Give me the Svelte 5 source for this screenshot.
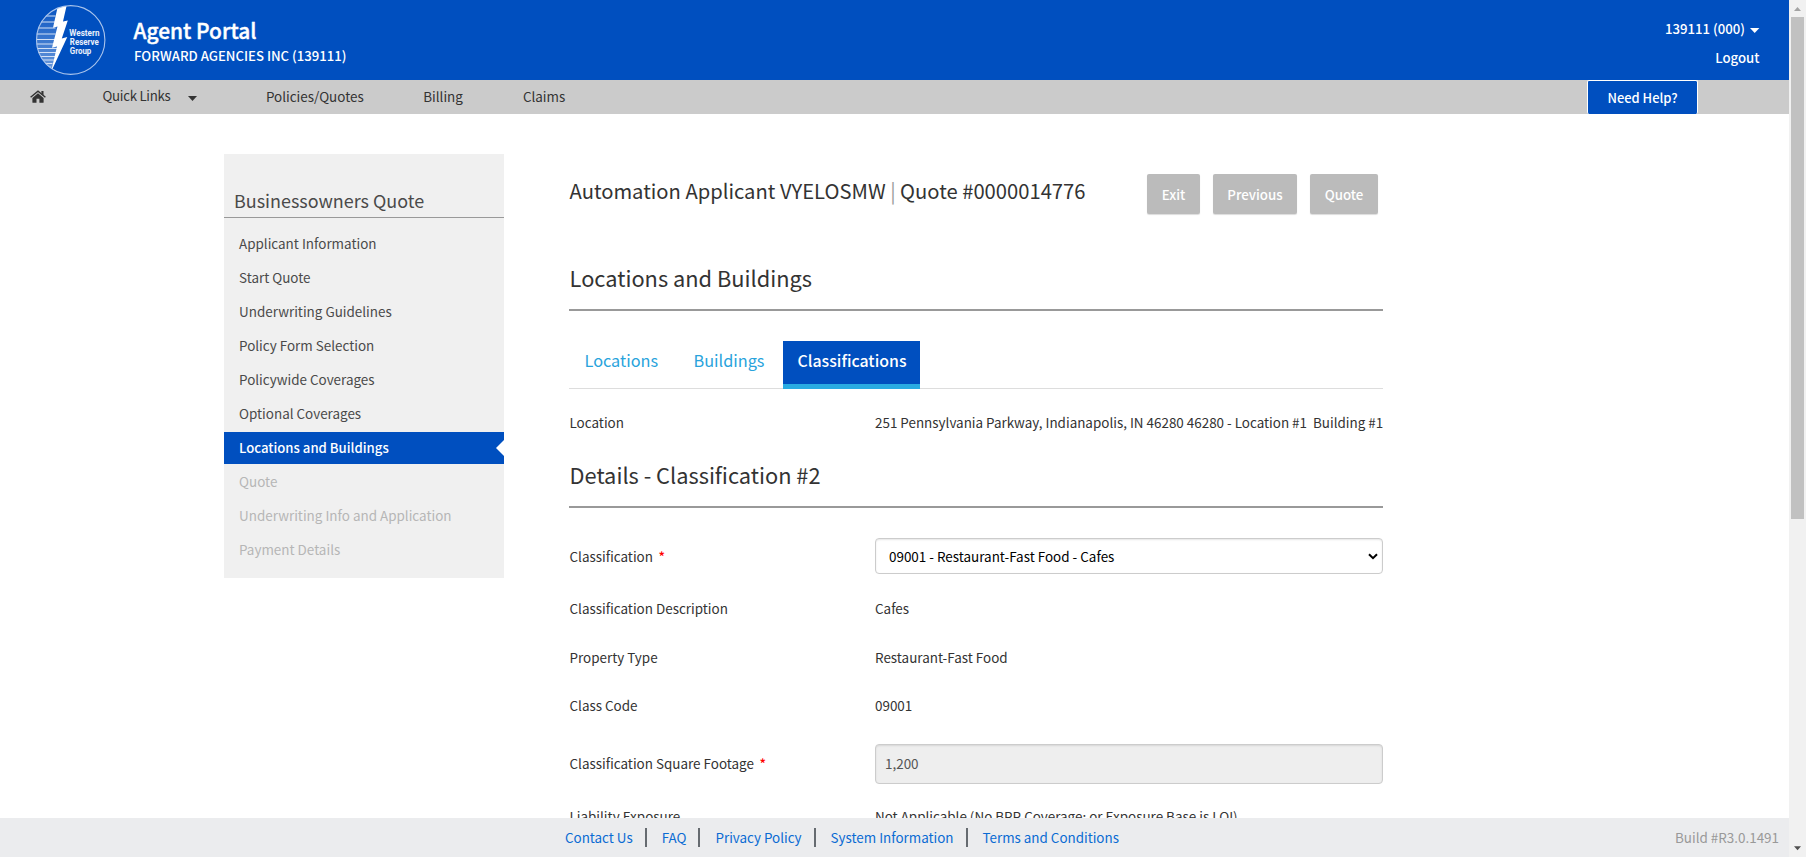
<script>
  const steps = [
    { label: 'Applicant Information', state: 'open' },
    { label: 'Start Quote', state: 'open' },
    { label: 'Underwriting Guidelines', state: 'open' },
    { label: 'Policy Form Selection', state: 'open' },
    { label: 'Policywide Coverages', state: 'open' },
    { label: 'Optional Coverages', state: 'open' },
    { label: 'Locations and Buildings', state: 'active' },
    { label: 'Quote', state: 'disabled' },
    { label: 'Underwriting Info and Application', state: 'disabled' },
    { label: 'Payment Details', state: 'disabled' }
  ];
  const footerLinks = ['Contact Us', 'FAQ', 'Privacy Policy', 'System Information', 'Terms and Conditions'];
  const stripes = [16, 22, 28, 34, 39.5, 44, 48.5, 52.5, 56.5, 60, 63.5, 67];
</script>

<div class="window">
  <div class="page">
    <header>
      <svg class="logo" width="71" height="72" viewBox="34.5 4 71 72">
        <defs>
          <clipPath id="disc"><ellipse cx="70.2" cy="40" rx="34.5" ry="34.5" /></clipPath>
          <linearGradient id="fade" x1="0" y1="0" x2="0" y2="1">
            <stop offset="0" stop-color="#0552c1" />
            <stop offset="1" stop-color="#8fb2e4" />
          </linearGradient>
        </defs>
        <g clip-path="url(#disc)">
          <path d="M56 4 L54 26 L59 26 L53 47 L58 47 L50 76 L34 76 L34 4Z" fill="url(#fade)" opacity=".8" />
          {#each stripes as y}
            <path d={`M34 ${y}H${y < 46 ? 55 : 59 - (y - 46) * 0.4}`} stroke="#d3e1f6" stroke-width="1.1" />
          {/each}
          <path d="M57.8 4 L66.5 4 L62.5 21.5 L67.3 20.5 L61.3 38.5 L66.8 37 L50.5 72 L56.5 46.5 L51.5 47.8 L57 26.5 L52.5 27.8Z" fill="#fff" />
        </g>
        <ellipse cx="70.2" cy="40" rx="34.2" ry="34.4" fill="none" stroke="#a9c4ec" stroke-width="1.1" />
        <g class="logo-text">
          <text x="68.8" y="35.6" textLength="30.2" lengthAdjust="spacingAndGlyphs">Western</text>
          <text x="69.3" y="44.7" textLength="29" lengthAdjust="spacingAndGlyphs">Reserve</text>
          <text x="69.3" y="53.7" textLength="21.5" lengthAdjust="spacingAndGlyphs">Group</text>
        </g>
      </svg>
      <div class="brand">
        <div class="portal">Agent Portal</div>
        <div class="agency">FORWARD AGENCIES INC (139111)</div>
      </div>
      <div class="account">
        <div class="user">139111 (000)<svg width="10" height="5" viewBox="0 0 10 5"><path d="M0 0h9.4L4.7 5z" fill="#fff" /></svg></div>
        <div class="logout">Logout</div>
      </div>
    </header>

    <nav>
      <svg class="home" width="16" height="13" viewBox="0 0 16 13">
        <path d="M8 3.3 L2.4 8 V12.2 Q2.4 12.7 2.9 12.7 H6.5 V8.8 H9.4 V12.7 H13.1 Q13.6 12.7 13.6 12.2 V8Z" fill="#333" />
        <path d="M0.6 7.2 L8 1.1 L15.4 7.2" fill="none" stroke="#333" stroke-width="1.4" />
        <path d="M11.4 .9H13.5V5.4L11.4 3.7Z" fill="#333" />
      </svg>
      <span class="quick">Quick Links</span>
      <svg class="caret" width="9" height="5" viewBox="0 0 9 5"><path d="M0 0h9L4.5 5z" fill="#333" /></svg>
      <span class="policies">Policies/Quotes</span>
      <span class="billing">Billing</span>
      <span class="claims">Claims</span>
      <button class="help">Need Help?</button>
    </nav>

    <main>
      <aside>
        <h3>Businessowners Quote</h3>
        <ul>
          {#each steps as step}
            <li class={step.state}>{step.label}</li>
          {/each}
        </ul>
      </aside>

      <section>
        <div class="title-row">
          <h1>Automation Applicant VYELOSMW <span>|</span> Quote #0000014776</h1>
          <div class="actions">
            <button>Exit</button>
            <button>Previous</button>
            <button>Quote</button>
          </div>
        </div>

        <h2 class="first">Locations and Buildings</h2>

        <div class="tabs">
          <div class="tab one">Locations</div>
          <div class="tab two">Buildings</div>
          <div class="tab selected">Classifications</div>
        </div>

        <div class="row location">
          <span>Location</span>
          <span class="address">251 Pennsylvania Parkway, Indianapolis, IN 46280 46280 - Location #1&nbsp; Building #1</span>
        </div>

        <h2>Details - Classification #2</h2>

        <div class="row classification">
          <span>Classification <i>*</i></span>
          <div class="select">
            09001 - Restaurant-Fast Food - Cafes
            <svg width="10" height="7" viewBox="0 0 10 7"><path d="M1 1.2L5 5.2L9 1.2" fill="none" stroke="#000" stroke-width="2" /></svg>
          </div>
        </div>
        <div class="row description"><span>Classification Description</span><span>Cafes</span></div>
        <div class="row property"><span>Property Type</span><span>Restaurant-Fast Food</span></div>
        <div class="row code"><span>Class Code</span><span>09001</span></div>
        <div class="row footage">
          <span>Classification Square Footage <i>*</i></span>
          <div class="input">1,200</div>
        </div>
        <div class="row liability">
          <span>Liability Exposure</span>
          <span>Not Applicable (No BPP Coverage; or Exposure Base is LOI)</span>
        </div>
      </section>
    </main>

    <footer>
      <div class="links">
        {#each footerLinks as link}
          <a href="#top">{link}</a>
        {/each}
      </div>
      <div class="build">Build #R3.0.1491</div>
    </footer>
  </div>

  <div class="scrollbar">
    <svg width="17" height="17" viewBox="0 0 17 17"><path d="M5 11L8.5 7L12 11Z" fill="#a3a3a3" /></svg>
    <div class="thumb"></div>
    <svg width="17" height="17" viewBox="0 0 17 17"><path d="M5 6.2H12L8.5 10.2Z" fill="#505050" /></svg>
  </div>
</div>

<style>
  :global(body) { margin: 0; background: #fff; overflow: hidden; }

  .window {
    display: grid;
    grid-template-columns: minmax(0, 1fr) 17px;
    height: 857px;
    overflow: hidden;
    font: 13.45px/20px "Noto Sans CJK SC", "Noto Sans", sans-serif;
    color: #333;
    white-space: nowrap;
  }
  .page { display: flex; flex-direction: column; height: 857px; min-width: 0; }

  header {
    display: flex;
    flex: none;
    height: 80px;
    box-sizing: border-box;
    padding: 4px 29px 0 34.5px;
    background: #004fbf;
    color: #fff;
    font-weight: 500;
  }
  .logo { flex: none; }
  .logo-text { font: 700 9.5px "Roboto", sans-serif; fill: #e9f0fb; }
  .brand { margin-left: 28px; padding-top: 10px; }
  .portal { font-size: 20.9px; line-height: 32px; -webkit-text-stroke: .4px #fff; }
  .agency { padding-left: .5px; font-size: 13.17px; line-height: 20px; }
  .account { display: flex; flex-direction: column; align-items: flex-end; margin-left: auto; padding-top: 15px; font-size: 13.2px; line-height: 20px; }
  .user { display: flex; align-items: center; gap: 5px; }
  .user svg { margin-top: 2px; }
  .logout { margin-top: 9px; padding-right: .5px; }

  nav {
    display: flex;
    flex: none;
    align-items: center;
    height: 34px;
    padding: 0 91px 0 30px;
    background: #cbcbcb;
  }
  .home { margin-bottom: 2px; }
  .quick { margin-left: 56.5px; font-size: 13.3px; letter-spacing: -.3px; }
  .caret { margin: 3px 0 0 17.5px; }
  .policies { margin-left: 69px; }
  .billing { margin-left: 59.5px; }
  .claims { margin-left: 60px; }
  nav span { height: 34px; line-height: 32px; }
  .help {
    width: 111px;
    height: 34px;
    margin-left: auto;
    padding: 0 0 1px;
    border: 1px solid #fff;
    border-bottom-width: 0;
    border-radius: 2px;
    background: #004fbf;
    color: #fff;
    font: 500 12.95px/31px "Noto Sans CJK SC", sans-serif;
  }

  main { display: flex; flex: 1; min-height: 0; align-items: flex-start; padding: 40px 0 0 224px; overflow: hidden; }

  aside { flex: none; width: 280px; height: 424px; background: #f0f0f0; color: #4a4a4a; }
  h3 { margin: 0; padding: 30px 0 0 10px; height: 33px; border-bottom: 1px solid #999; font-size: 17.95px; font-weight: 400; line-height: 32px; }
  ul { margin: 10px 0 0; padding: 0; list-style: none; }
  li { box-sizing: border-box; height: 32px; margin-bottom: 2px; padding-left: 15px; line-height: 30px; }
  .active {
    display: flex;
    justify-content: space-between;
    align-items: center;
    background: #004fbf;
    color: #fff;
    font-size: 13.17px;
    font-weight: 500;
    line-height: 32px;
  }
  .active::after { content: ''; border: 8px solid transparent; border-left-width: 0; border-right-color: #fff; }
  .disabled { color: #b6b6b6; }

  section { width: 814px; margin-left: 65px; }
  .title-row { display: flex; justify-content: space-between; height: 60px; padding-right: 5px; }
  h1 { margin: 20px 0 0 .5px; font-size: 20.21px; font-weight: 400; line-height: 33px; }
  h1 span { color: #999; }
  .actions { display: grid; grid-template-columns: 53px 84px 68px; column-gap: 13px; padding-top: 20px; }
  .actions button {
    height: 40px;
    padding: 0;
    border: 0;
    border-radius: 2px;
    background: #bbb;
    box-shadow: 0 1px 1px rgba(0, 0, 0, .14);
    color: #fff;
    font: 500 13.3px/41px "Noto Sans CJK SC", sans-serif;
  }

  h2 { margin: 23px 0 0; padding-left: .6px; height: 46px; border-bottom: 2px solid #999; font-size: 21.8px; font-weight: 400; line-height: 30px; }
  h2.first { margin-top: 49px; }

  .tabs { display: flex; height: 47px; margin-top: 30px; border-bottom: 1px solid #ddd; color: #29a3dc; font-size: 16.3px; line-height: 38px; }
  .tab { flex: none; }
  .one { width: 92.5px; padding-left: 15.5px; }
  .two { width: 89.5px; padding-left: 16.5px; }
  .selected { box-sizing: border-box; width: 137px; height: 48px; padding-left: 14.5px; border-bottom: 5px solid #29abe2; background: #004fbf; color: #fff; font-size: 15.88px; font-weight: 500; line-height: 40px; }

  .row { display: grid; grid-template-columns: 306px 508px; align-items: center; height: 48px; }
  .row > span:first-child { padding-left: .5px; }
  .row i { margin-left: 2.5px; color: #f00; font-style: normal; font-weight: 500; }
  .location { height: 30px; margin-top: 18px; }
  .address { font-size: 13.43px; }
  .classification { height: 36px; margin: 30px 0 10px; }
  .property { height: 49px; }
  .select, .input { box-sizing: border-box; border: 1px solid #ccc; border-radius: 4px; box-shadow: inset 0 1px 2px rgba(0, 0, 0, .1); }
  .select { display: flex; justify-content: space-between; align-items: center; height: 36px; padding: 0 4px 0 13px; background: #fff; color: #000; }
  .input { height: 40px; padding-left: 9px; background: #eee; color: #555; line-height: 36px; }
  .footage { height: 40px; margin: 15px 0 8px; }
  .footage > span { padding-bottom: 2px; }

  footer { display: flex; flex: none; justify-content: space-between; align-items: center; height: 39px; padding: 0 10px 0 565px; background: #ebecee; }
  .links { display: flex; align-items: center; }
  a { color: #0a6bd3; text-decoration: none; line-height: 19px; font-size: 13.4px; }
  a + a { margin-left: 12px; padding-left: 15px; border-left: 2px solid #666b70; }
  .build { padding-bottom: 1px; color: #999; }

  .scrollbar { display: flex; flex-direction: column; height: 857px; background: #f1f1f1; }
  .scrollbar svg { flex: none; }
  .thumb { width: 13px; height: 502px; margin: 0 2px auto; background: #c1c1c1; }
</style>
